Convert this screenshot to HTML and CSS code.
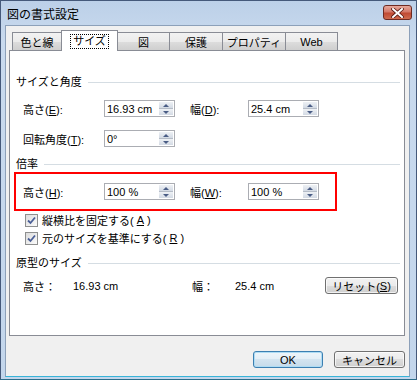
FILE: index.html
```html
<!DOCTYPE html>
<html lang="ja">
<head>
    <meta charset="UTF-8">
    <title>図の書式設定</title>
    <link rel="stylesheet" href="styles.css">
</head>
<body>
    <div class="window">
        <!-- タイトルバー -->
        <div class="titlebar">
            <span class="title">図の書式設定</span>
            <span class="close-btn">
                <svg width="13" height="10" viewBox="0 0 13 10">
                    <path d="M2 1 L11 9 M11 1 L2 9" stroke="#5a1b14" stroke-width="3.6" stroke-linecap="square"/>
                    <path d="M2 1 L11 9 M11 1 L2 9" stroke="#fff" stroke-width="2" stroke-linecap="square"/>
                </svg>
            </span>
        </div>

        <div class="client">
            <!-- タブ -->
            <div class="tabs">
                <div class="tab w1">色と線</div>
                <div class="tab active w2"><span class="focus">サイズ</span></div>
                <div class="tab w3">図</div>
                <div class="tab w4">保護</div>
                <div class="tab w5">プロパティ</div>
                <div class="tab w6">Web</div>
            </div>

            <div class="panel">
                <div class="group-title">サイズと角度</div>
                <div class="row first">
                    <span class="label">高さ(<u>E</u>):</span>
                    <div class="spin"><span class="val">16.93 cm</span><span class="spinner"><span class="up"></span><span class="down"></span></span></div>
                    <span class="label2">幅(<u>D</u>):</span>
                    <div class="spin"><span class="val">25.4 cm</span><span class="spinner"><span class="up"></span><span class="down"></span></span></div>
                </div>
                <div class="row second">
                    <span class="label">回転角度(<u>T</u>):</span>
                    <div class="spin"><span class="val">0°</span><span class="spinner"><span class="up"></span><span class="down"></span></span></div>
                </div>

                <div class="group-title g2">倍率</div>
                <div class="highlight">
                    <div class="row">
                        <span class="label">高さ(<u>H</u>):</span>
                        <div class="spin"><span class="val">100 %</span><span class="spinner"><span class="up"></span><span class="down"></span></span></div>
                        <span class="label2">幅(<u>W</u>):</span>
                        <div class="spin"><span class="val">100 %</span><span class="spinner"><span class="up"></span><span class="down"></span></span></div>
                    </div>
                </div>
                <div class="check first-check">
                    <span class="box"><svg width="9" height="9" viewBox="0 0 9 9"><path d="M1 4.5 L3.5 7 L8 1.5" fill="none" stroke="#4a5f97" stroke-width="1.8"/></svg></span>
                    縦横比を固定する(<u>A</u>)
                </div>
                <div class="check">
                    <span class="box"><svg width="9" height="9" viewBox="0 0 9 9"><path d="M1 4.5 L3.5 7 L8 1.5" fill="none" stroke="#4a5f97" stroke-width="1.8"/></svg></span>
                    元のサイズを基準にする(<u>R</u>)
                </div>

                <div class="group-title g3">原型のサイズ</div>
                <div class="info-row">
                    <span class="info-label">高さ：</span>
                    <span class="info-val">16.93 cm</span>
                    <span class="info-label2">幅：</span>
                    <span class="info-val2">25.4 cm</span>
                    <span class="btn reset">リセット(<u>S</u>)</span>
                </div>
            </div>

            <!-- 下部ボタン -->
            <div class="buttons">
                <span class="btn default">OK</span>
                <span class="btn">キャンセル</span>
            </div>
        </div>
    </div>
</body>
</html>
```

FILE: styles.css
```css
/* 全体 */
* {
    margin: 0;
    padding: 0;
    box-sizing: border-box;
}

body {
    font-family: "Liberation Sans", "Noto Sans CJK JP", sans-serif;
    font-size: 11px;
    color: #000;
    background: #fff;
}

u {
    text-decoration: underline;
    text-underline-offset: 1px;
}

/* ウィンドウ枠 */
.window {
    width: 417px;
    height: 380px;
    border: 1px solid #45597a;
    border-bottom-color: #2c6f8c;
    background: linear-gradient(#bcd0e8, #c9daee 40px, #c3d6ec);
    padding: 0 6px 2px 4px;
    display: flex;
    flex-direction: column;
}

.titlebar {
    height: 24px;
    display: flex;
    align-items: center;
    justify-content: space-between;
}

.title {
    font-size: 12px;
    padding-left: 2px;
    padding-top: 1px;
}

.close-btn {
    width: 29px;
    height: 15px;
    margin-right: -2px;
    margin-top: -1px;
    border: 1px solid #6d2a22;
    border-radius: 3px;
    background: linear-gradient(#e6a89c, #d47868 45%, #c04a33 55%, #cf6b4f);
    display: flex;
    align-items: center;
    justify-content: center;
}

/* クライアント領域 */
.client {
    flex: 1;
    background: #f0f0f0;
    border: 1px solid #8ca0b9;
    border-bottom-color: #38b4d8;
    padding: 4px 4px 0 3px;
    display: flex;
    flex-direction: column;
}

/* タブ */
.tabs {
    display: flex;
    height: 20px;
    padding-left: 3px;
    align-items: flex-end;
}

.tab {
    height: 18px;
    border: 1px solid #898c95;
    border-bottom: none;
    border-left: none;
    background: linear-gradient(#f2f2f2, #ebebeb 50%, #dddddd 50%, #cfcfcf);
    display: flex;
    align-items: center;
    justify-content: center;
    padding-top: 1px;
}

.tab.w1 { width: 50px; border-left: 1px solid #898c95; }
.tab.w2 { width: 57px; }
.tab.w3 { width: 52px; }
.tab.w4 { width: 53px; }
.tab.w5 { width: 63px; }
.tab.w6 { width: 52px; }

.tab.active {
    height: 21px;
    margin-bottom: -1px;
    background: #fff;
    border-left: 1px solid #898c95;
    margin-left: -1px;
    position: relative;
}

.focus {
    border: 1px dotted #000;
    padding: 0 2px;
    line-height: 13px;
}

/* パネル */
.panel {
    height: 286px;
    background: #fff;
    border: 1px solid #898c95;
    padding: 24px 4px 0 0;
    display: flex;
    flex-direction: column;
}

.group-title {
    height: 14px;
    line-height: 14px;
    padding-left: 6px;
    display: flex;
    align-items: center;
    white-space: nowrap;
}

.group-title::after {
    content: "";
    flex: 1;
    height: 1px;
    background: #d5dde3;
    margin-left: 6px;
}

.g2 { margin-top: 10px; }
.g3 { margin-top: 11px; }

/* 入力行 */
.row {
    display: flex;
    align-items: center;
    height: 17px;
    padding-left: 13px;
}

.row.first { margin-top: 11px; }
.row.second { margin-top: 13px; }

.label {
    width: 81px;
}

.label2 {
    width: 58px;
    margin-left: 15px;
}

.spin {
    width: 71px;
    height: 17px;
    border: 1px solid #abadb3;
    display: flex;
    align-items: center;
    justify-content: space-between;
    padding: 0 1px 0 2px;
    background: #fff;
}

.val {
    font-size: 11px;
}

.spinner {
    width: 14px;
    height: 13px;
    display: flex;
    flex-direction: column;
    gap: 1px;
    background: #b5bcc7;
}

.spinner .up,
.spinner .down {
    flex: 1;
    display: flex;
    align-items: center;
    justify-content: center;
    background: linear-gradient(#eef1f5, #d3dae4);
}

.spinner .up::before {
    content: "";
    border-left: 3px solid transparent;
    border-right: 3px solid transparent;
    border-bottom: 3px solid #4a5d85;
}

.spinner .down::before {
    content: "";
    border-left: 3px solid transparent;
    border-right: 3px solid transparent;
    border-top: 3px solid #4a5d85;
}

/* 赤枠 */
.highlight {
    margin: 1px 0 0 4px;
    width: 323px;
    height: 39px;
    border: 2px solid #f00;
    padding-top: 9px;
}

.highlight .row {
    padding-left: 7px;
}

/* チェックボックス */
.check {
    display: flex;
    align-items: center;
    height: 14px;
    margin-top: 4px;
    padding-left: 15px;
    gap: 3px;
}

.check.first-check { margin-top: 2px; }

.box {
    width: 13px;
    height: 13px;
    border: 1px solid #8e8f8f;
    background: linear-gradient(135deg, #dcdcdc, #fbfbfb);
    display: flex;
    align-items: center;
    justify-content: center;
    margin-right: 1px;
}

/* 原型のサイズ */
.info-row {
    display: flex;
    align-items: center;
    height: 17px;
    margin-top: 7px;
    padding-left: 13px;
}

.info-label { width: 50px; }
.info-val { width: 119px; }
.info-label2 { width: 43px; }
.info-val2 { width: 90px; }

/* ボタン */
.btn {
    height: 17px;
    border: 1px solid #707070;
    border-radius: 3px;
    background: linear-gradient(#f2f2f2, #ebebeb 50%, #dddddd 50%, #cfcfcf);
    display: flex;
    align-items: center;
    justify-content: center;
    box-shadow: inset 0 0 0 1px rgba(255,255,255,0.7);
}

.reset {
    width: 73px;
}

.buttons {
    display: flex;
    justify-content: flex-end;
    gap: 11px;
    margin-top: 15px;
}

.buttons .btn {
    width: 71px;
}

.btn.default {
    width: 70px;
    border-color: #3c7fb1;
    background: linear-gradient(#eef5fa, #e3eef6 50%, #d3e4f0 50%, #c6dbea);
    box-shadow: inset 0 0 0 1px #aedcf4;
}
```
